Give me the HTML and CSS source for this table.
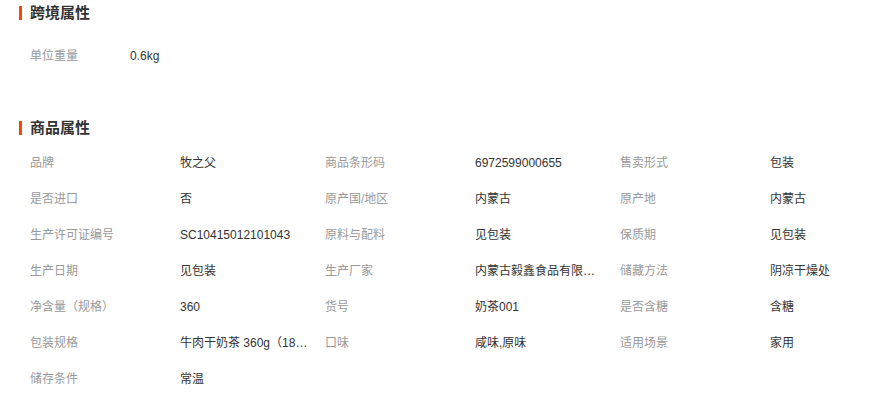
FILE: index.html
```html
<!DOCTYPE html>
<html lang="zh-CN">
<head>
<meta charset="utf-8">
<link rel="stylesheet" href="styles.css">
</head>
<body>
<div class="page">
  <section class="block block-cross">
    <h2 class="title">跨境属性</h2>
    <div class="cross-grid">
      <div class="label">单位重量</div>
      <div class="value">0.6kg</div>
    </div>
  </section>
  <section class="block block-goods">
    <h2 class="title">商品属性</h2>
    <div class="attr-grid">
      <div class="label">品牌</div><div class="value">牧之父</div>
      <div class="label">商品条形码</div><div class="value">6972599000655</div>
      <div class="label">售卖形式</div><div class="value">包装</div>

      <div class="label">是否进口</div><div class="value">否</div>
      <div class="label">原产国/地区</div><div class="value">内蒙古</div>
      <div class="label">原产地</div><div class="value">内蒙古</div>

      <div class="label">生产许可证编号</div><div class="value">SC10415012101043</div>
      <div class="label">原料与配料</div><div class="value">见包装</div>
      <div class="label">保质期</div><div class="value">见包装</div>

      <div class="label">生产日期</div><div class="value">见包装</div>
      <div class="label">生产厂家</div><div class="value">内蒙古毅鑫食品有限公司</div>
      <div class="label">储藏方法</div><div class="value">阴凉干燥处</div>

      <div class="label">净含量（规格）</div><div class="value">360</div>
      <div class="label">货号</div><div class="value">奶茶001</div>
      <div class="label">是否含糖</div><div class="value">含糖</div>

      <div class="label">包装规格</div><div class="value">牛肉干奶茶 360g（18袋装）</div>
      <div class="label">口味</div><div class="value">咸味,原味</div>
      <div class="label">适用场景</div><div class="value">家用</div>

      <div class="label">储存条件</div><div class="value">常温</div>
    </div>
  </section>
</div>
</body>
</html>
```

FILE: styles.css
```css
html, body {
  margin: 0;
  padding: 0;
  background: #fff;
}

body {
  font-family: "Liberation Sans", "Noto Sans CJK SC", sans-serif;
  font-size: 12px;
  color: #333;
}

.page {
  width: 887px;
}

.title {
  margin: 0;
  position: relative;
  height: 26px;
  line-height: 26px;
  padding-left: 30px;
  font-size: 15px;
  font-weight: bold;
  color: #333;
}

.title::before {
  content: "";
  position: absolute;
  left: 19px;
  top: 6px;
  width: 3px;
  height: 14px;
  background: #ff4400;
}

.cross-grid {
  margin-top: 12px;
  padding-left: 30px;
  display: grid;
  grid-template-columns: 100px 1fr;
}

.block-goods {
  margin-top: 41px;
}

.attr-grid {
  margin-top: 4px;
  padding-left: 30px;
  display: grid;
  grid-template-columns: 150px 145px 150px 145px 150px 1fr;
}

.label, .value {
  height: 36px;
  line-height: 36px;
  white-space: nowrap;
  overflow: hidden;
}

.label {
  color: #999;
}

.value {
  color: #333;
}

.attr-grid .value {
  max-width: 129px;
  text-overflow: ellipsis;
}
```
